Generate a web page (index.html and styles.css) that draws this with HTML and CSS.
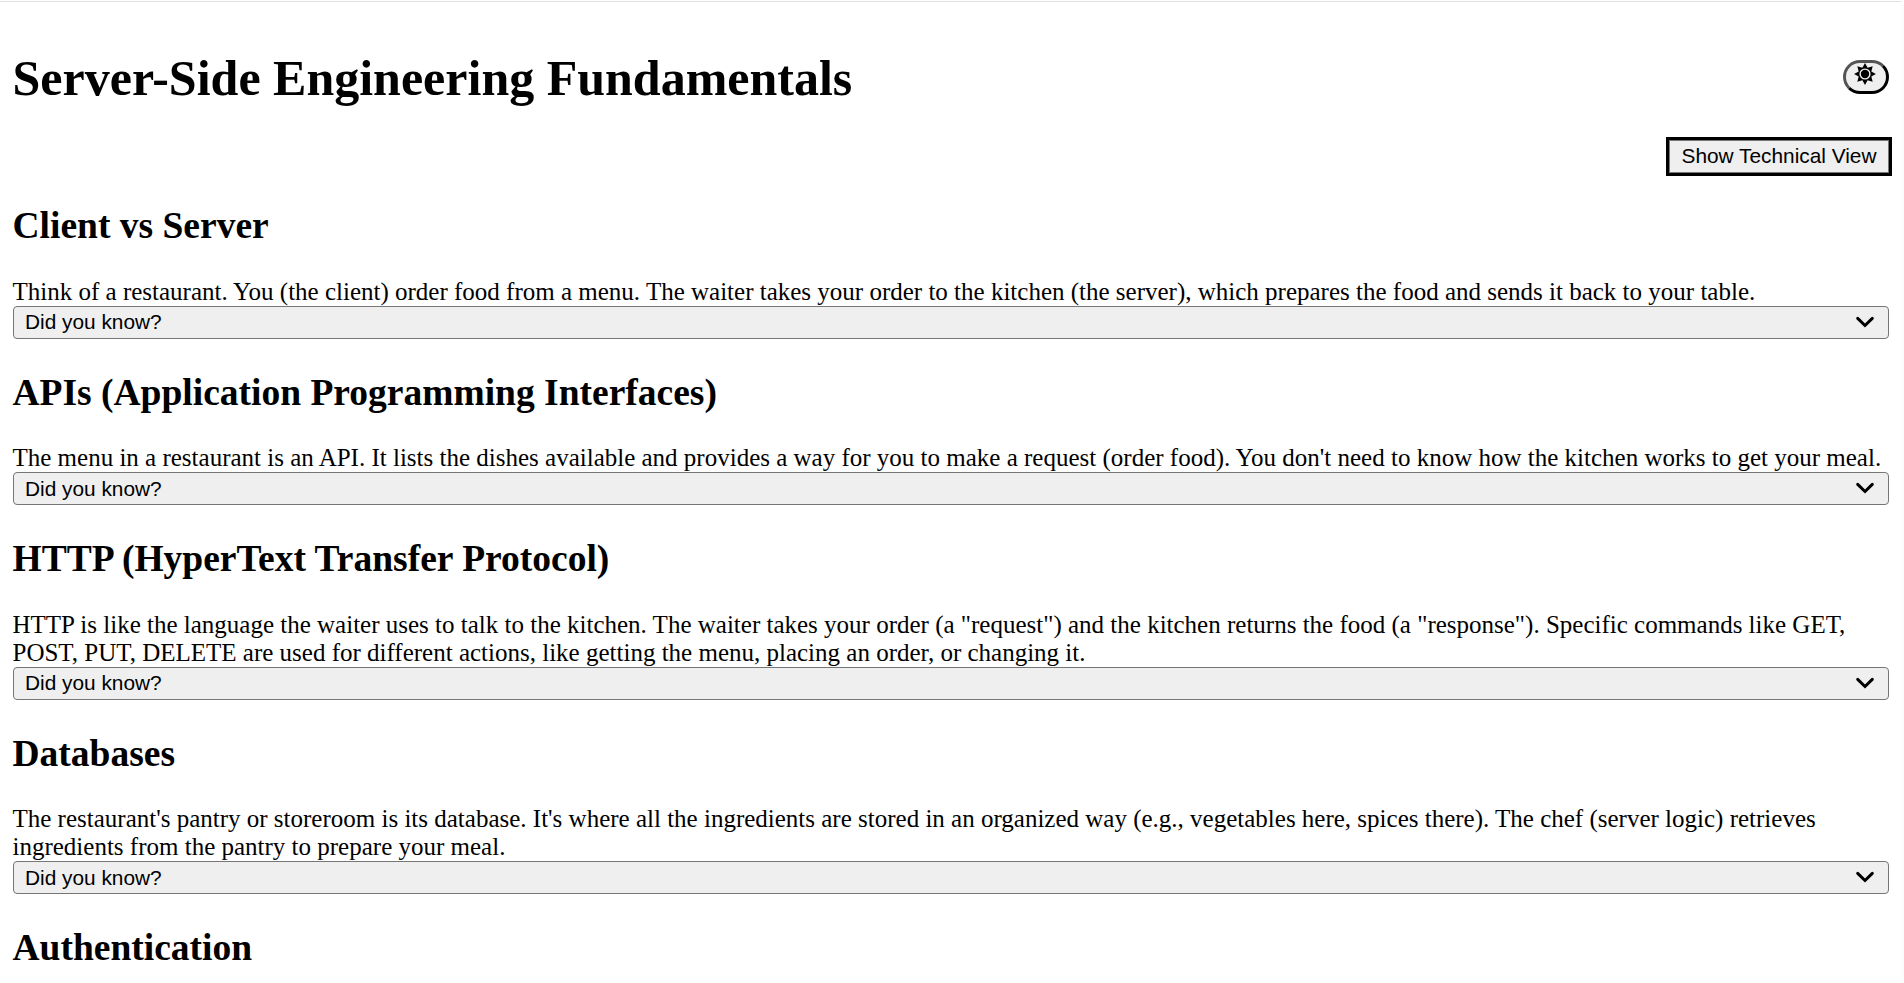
FILE: index.html
```html
<!DOCTYPE html>
<html lang="en">
<head>
<meta charset="utf-8">
<title>Server-Side Engineering Fundamentals</title>
<link rel="stylesheet" href="styles.css">
</head>
<body>
<svg class="defs" aria-hidden="true">
  <symbol id="chevron" viewBox="0 0 20 20"><path d="M2.7 6.4 10 13.5 17.3 6.4" fill="none" stroke="#000" stroke-width="3" stroke-linecap="round"/></symbol>
</svg>
<div class="page">
  <header class="header">
    <h1 class="title">Server-Side Engineering Fundamentals</h1>
    <button class="theme" aria-label="Toggle theme">
      <svg class="sun" viewBox="-11 -11 22 22">
        <path d="M0-10.9 2.6-6.3 7.7-7.7 6.3-2.6 10.9 0 6.3 2.6 7.7 7.7 2.6 6.3 0 10.9-2.6 6.3-7.7 7.7-6.3 2.6-10.9 0-6.3-2.6-7.7-7.7-2.6-6.3Z"/>
        <circle r="4.9" fill="none" stroke="#efefef" stroke-width="1.4"/>
      </svg>
    </button>
  </header>
  <div class="toolbar"><button class="view">Show Technical View</button></div>
  <main>
    <section class="topic">
      <h2 class="heading">Client vs Server</h2>
      <p class="text">Think of a restaurant. You (the client) order food from a menu. The waiter takes your order to the kitchen (the server), which prepares the food and sends it back to your table.</p>
      <button class="fact">Did you know?<svg class="chevron"><use href="#chevron"/></svg></button>
    </section>
    <section class="topic">
      <h2 class="heading">APIs (Application Programming Interfaces)</h2>
      <p class="text">The menu in a restaurant is an API. It lists the dishes available and provides a way for you to make a request (order food). You don't need to know how the kitchen works to get your meal.</p>
      <button class="fact">Did you know?<svg class="chevron"><use href="#chevron"/></svg></button>
    </section>
    <section class="topic">
      <h2 class="heading">HTTP (HyperText Transfer Protocol)</h2>
      <p class="text">HTTP is like the language the waiter uses to talk to the kitchen. The waiter takes your order (a "request") and the kitchen returns the food (a "response"). Specific commands like GET, POST, PUT, DELETE are used for different actions, like getting the menu, placing an order, or changing it.</p>
      <button class="fact">Did you know?<svg class="chevron"><use href="#chevron"/></svg></button>
    </section>
    <section class="topic">
      <h2 class="heading">Databases</h2>
      <p class="text">The restaurant's pantry or storeroom is its database. It's where all the ingredients are stored in an organized way (e.g., vegetables here, spices there). The chef (server logic) retrieves ingredients from the pantry to prepare your meal.</p>
      <button class="fact">Did you know?<svg class="chevron"><use href="#chevron"/></svg></button>
    </section>
    <section class="topic">
      <h2 class="heading">Authentication</h2>
    </section>
  </main>
</div>
</body>
</html>
```
FILE: styles.css
```css
* { box-sizing: border-box; }
html { background: #fcfcfc; }
body {
  margin: 0;
  height: 983px;
  overflow: hidden;
  font-family: "Liberation Serif", "Times New Roman", serif;
  font-size: 25px;
  color: #000;
}
.defs { display: none; }
.page {
  width: 1901px;
  height: 983px;
  padding: 0 12px 0 12.5px;
  background: linear-gradient(#fff 1px, #e0e0e0 1px, #e0e0e0 2px, #fff 2px);
}
.header {
  display: flex;
  justify-content: space-between;
  align-items: flex-start;
  padding-top: 51px;
}
.title { margin: 0; font-size: 50px; line-height: 54px; height: 55px; }
.theme {
  width: 46px;
  height: 34px;
  margin-top: 9px;
  padding: 0;
  display: flex;
  justify-content: center;
  align-items: flex-start;
  background: #efefef;
  border: 3px outset #000;
  border-radius: 17px;
}
.sun { width: 22px; height: 22px; margin: 0 1.4px 0 0; display: block; }
.toolbar {
  display: flex;
  justify-content: flex-end;
  margin-right: -3px;
  padding-top: 31px;
}
.view {
  width: 226px;
  height: 39px;
  padding: 0 0 2px;
  background: #efefef;
  border: 3px solid #000;
  box-shadow: inset 0 0 0 1px #777;
  font: 20.833px/31px "Liberation Sans", Arial, sans-serif;
}
.topic { margin-bottom: 32.8px; }
main { padding-top: 29.2px; }
.heading { margin: 0 0 30.7px; font-size: 37.5px; line-height: 42px; }
.text { margin: 0; line-height: 28px; }
.fact {
  display: flex;
  justify-content: space-between;
  align-items: center;
  width: 100%;
  height: 33px;
  padding: 0 12.7px 1px 11.5px;
  background: #efefef;
  border: 1px solid #767676;
  border-radius: 4px;
  color: #000;
  font: 20.833px/23px "Liberation Sans", Arial, sans-serif;
}
.chevron { width: 20px; height: 20px; }
```
